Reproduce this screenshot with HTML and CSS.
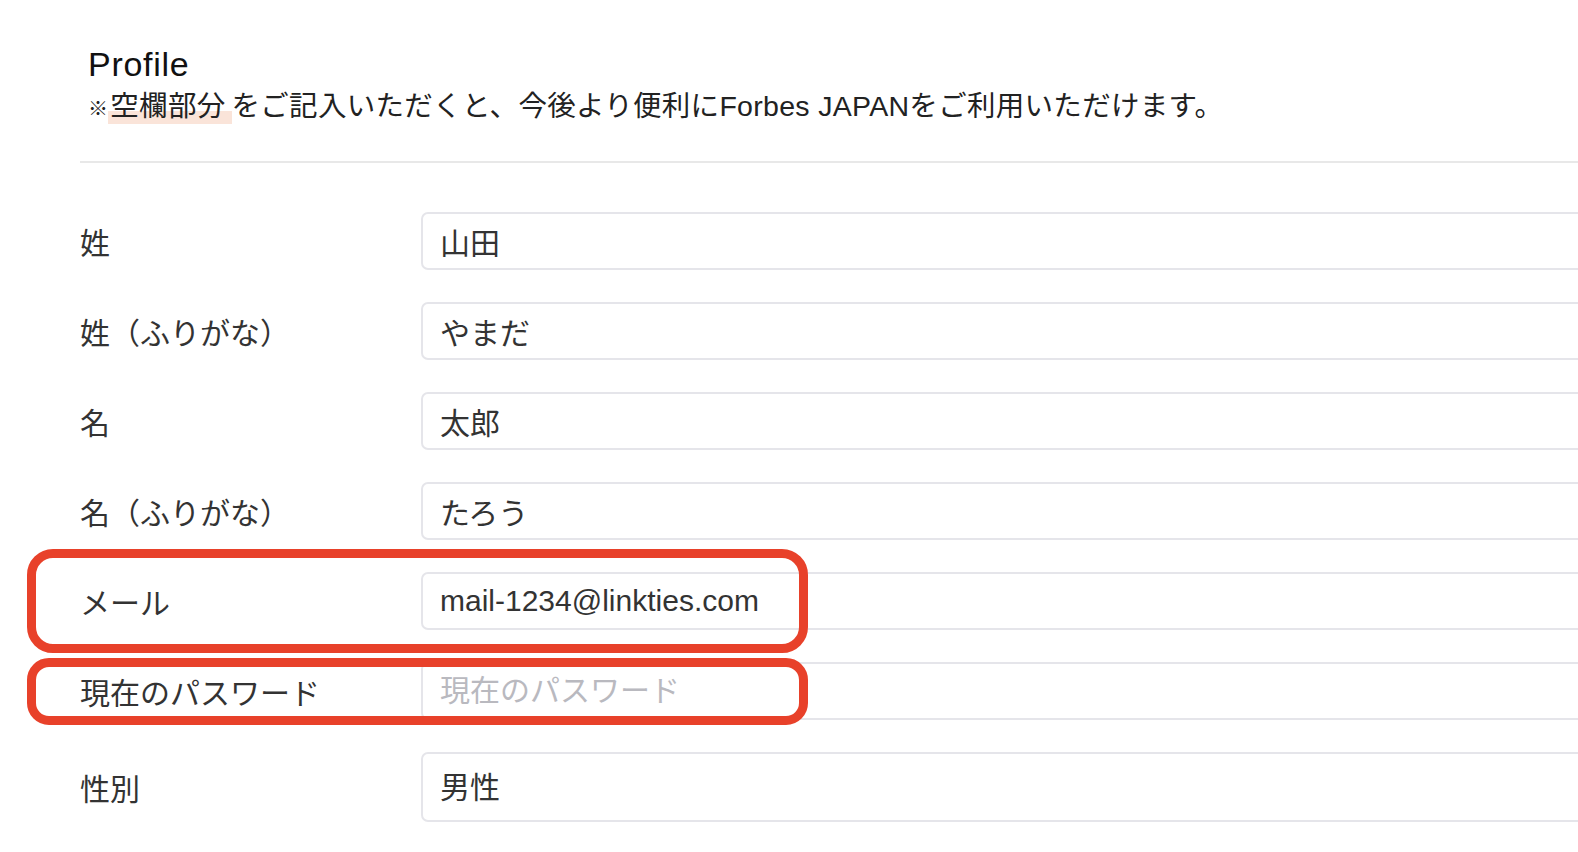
FILE: index.html
```html
<!DOCTYPE html>
<html lang="ja">

<head>
    <meta charset="UTF-8">
    <meta name="viewport" content="width=device-width,initial-scale=1.0">
    <title>Profile</title>
    <link rel="stylesheet" href="styles.css">
</head>

<body>
    <div class="profile-page">
        <!-- 見出し -->
        <div class="profile-head">
            <h2>Profile</h2>
            <p class="lead"><span class="note-mark">※</span><span class="marker">空欄部分</span>をご記入いただくと、今後より便利にForbes JAPANをご利用いただけます。</p>
        </div>
        <hr class="divider">

        <!-- 入力フォーム -->
        <form class="profile-form">
            <div class="form-row">
                <label for="lastName">姓</label>
                <input type="text" id="lastName" value="山田">
            </div>
            <div class="form-row">
                <label for="lastKana">姓（ふりがな）</label>
                <input type="text" id="lastKana" value="やまだ">
            </div>
            <div class="form-row">
                <label for="firstName">名</label>
                <input type="text" id="firstName" value="太郎">
            </div>
            <div class="form-row">
                <label for="firstKana">名（ふりがな）</label>
                <input type="text" id="firstKana" value="たろう">
            </div>
            <div class="form-row">
                <label for="mail">メール</label>
                <input type="text" id="mail" value="mail-1234@linkties.com">
                <div class="callout callout-mail"></div>
            </div>
            <div class="form-row">
                <label for="currentPassword">現在のパスワード</label>
                <input type="password" id="currentPassword" placeholder="現在のパスワード">
                <div class="callout callout-pass"></div>
            </div>
            <div class="form-row">
                <label for="gender">性別</label>
                <select id="gender">
                    <option>男性</option>
                    <option>女性</option>
                </select>
            </div>
        </form>
    </div>
</body>

</html>
```

FILE: styles.css
```css
/* リセット */
* {
    margin: 0;
    padding: 0;
    box-sizing: border-box;
}

html,
body {
    background-color: #fff;
    font-family: "Liberation Sans", "Noto Sans CJK JP", sans-serif;
    color: #333;
}

body {
    overflow: hidden;
}

/* ページ全体（右側は画面外まで続く） */
.profile-page {
    width: 1720px;
    padding: 44px 0 0 80px;
}

/* 見出し */
.profile-head {
    padding-left: 8px;
}

.profile-head h2 {
    font-size: 34px;
    font-weight: normal;
    line-height: 40px;
    letter-spacing: 0.7px;
    color: #111;
}

.lead {
    margin-top: 2px;
    font-size: 28.5px;
    line-height: 40px;
    letter-spacing: 0.3px;
    color: #222;
}

.note-mark {
    font-size: 20px;
}

/* 蛍光ペン風のマーカー */
.marker {
    padding: 0 6px 2px 2px;
    background: linear-gradient(transparent 61%, #fae4d9 61%);
}

.divider {
    border: 0;
    height: 2px;
    background-color: #e8e8e8;
    margin-top: 32px;
}

/* フォーム */
.profile-form {
    display: flex;
    flex-direction: column;
    gap: 32px;
    margin-top: 49px;
}

.form-row {
    position: relative;
    display: grid;
    grid-template-columns: 341px 1fr;
    align-items: center;
}

.form-row label {
    font-size: 30px;
    color: #333;
}

.form-row input,
.form-row select {
    width: 100%;
    height: 58px;
    padding: 0 17px;
    border: 2px solid #e5e5ea;
    border-radius: 7px;
    background-color: #fff;
    font-family: inherit;
    font-size: 30px;
    color: #333;
    outline: none;
}

.form-row input::placeholder {
    color: #b9b9bf;
}

.form-row select {
    height: 70px;
    appearance: none;
    -webkit-appearance: none;
}

/* 赤枠の注記 */
.callout {
    position: absolute;
    left: -53px;
    width: 781px;
    border: 9px solid #e8412a;
    pointer-events: none;
}

.callout-mail {
    top: -23px;
    bottom: -23px;
    border-radius: 26px;
}

.callout-pass {
    top: -4px;
    bottom: -5px;
    border-radius: 22px;
}
```
